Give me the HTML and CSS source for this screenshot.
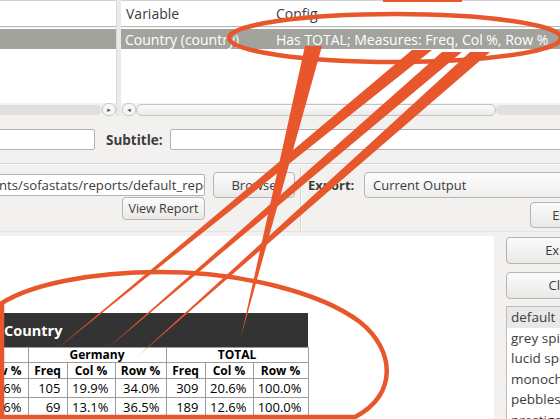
FILE: index.html
```html
<!DOCTYPE html>
<html lang="en">
<head>
    <meta charset="UTF-8">
    <title>Make Report Table</title>
    <link rel="stylesheet" href="styles.css">
</head>
<body>
<div class="window">
    <div class="top">
        <div class="pane pane-left">
            <div class="list-head"></div>
            <div class="list-row selected"></div>
            <div class="list-fill"></div>
            <div class="hscroll">
                <div class="trough"></div>
                <div class="arrow">&#9656;</div>
            </div>
        </div>
        <div class="sash"></div>
        <div class="pane pane-right">
            <div class="list-head">
                <div class="col col-var">Variable</div>
                <div class="col col-config">Config</div>
            </div>
            <div class="list-row selected">
                <div class="col col-var">Country (country)</div>
                <div class="col col-config">Has TOTAL; Measures: Freq, Col %, Row %</div>
            </div>
            <div class="list-fill"></div>
            <div class="hscroll">
                <div class="arrow">&#9666;</div>
                <div class="slider"></div>
                <div class="trough"></div>
            </div>
        </div>
    </div>

    <div class="titles">
        <div class="field title-field"></div>
        <span class="label">Subtitle:</span>
        <div class="field subtitle-field"></div>
    </div>

    <div class="output">
        <div class="output-left">
            <div class="field path-field">nts/sofastats/reports/default_report.htm</div>
            <div class="btn browse">Browse</div>
            <div class="btn view-report">View Report</div>
        </div>
        <div class="vsep"></div>
        <div class="output-right">
            <span class="label">Export:</span>
            <div class="combo">Current Output</div>
            <div class="btn export-small">Export</div>
        </div>
    </div>

    <div class="bottom">
        <div class="report">
            <table class="result">
                <colgroup>
                    <col class="c-first">
                    <col class="c-freq"><col class="c-col"><col class="c-row">
                    <col class="c-freq"><col class="c-col"><col class="c-row-last">
                </colgroup>
                <thead>
                    <tr><th class="var-head" colspan="7">Country</th></tr>
                    <tr class="groups">
                        <th></th>
                        <th colspan="3">Germany</th>
                        <th colspan="3">TOTAL</th>
                    </tr>
                    <tr class="measures">
                        <th class="first">Row %</th>
                        <th>Freq</th><th>Col %</th><th>Row %</th>
                        <th>Freq</th><th>Col %</th><th>Row %</th>
                    </tr>
                </thead>
                <tbody>
                    <tr><td>28.6%</td><td>105</td><td>19.9%</td><td>34.0%</td><td>309</td><td>20.6%</td><td>100.0%</td></tr>
                    <tr><td>31.6%</td><td>69</td><td>13.1%</td><td>36.5%</td><td>189</td><td>12.6%</td><td>100.0%</td></tr>
                </tbody>
            </table>
        </div>
        <div class="side">
            <div class="btn side-btn">Export</div>
            <div class="btn side-btn">Close</div>
            <div class="styles-list">
                <div class="style-item current">default</div>
                <div class="style-item">grey spirals</div>
                <div class="style-item">lucid spirals</div>
                <div class="style-item">monochrome</div>
                <div class="style-item">pebbles</div>
                <div class="style-item">prestige</div>
            </div>
        </div>
    </div>

    <!-- annotation drawn over the screen -->
    <svg class="marks" width="560" height="419" viewBox="0 0 560 419">
        <rect x="383" y="0" width="79" height="2" fill="#e8562b"/>
        <ellipse cx="395" cy="38" rx="166" ry="24" fill="none" stroke="#e8562b" stroke-width="4.5"/>
        <polygon points="305,46 322,46 241,337" fill="#e8562b"/>
        <polygon points="412,50 432,50 58,348" fill="#e8562b"/>
        <polygon points="442,52 462,52 108,348" fill="#e8562b"/>
        <polygon points="470,52 490,52 138,356" fill="#e8562b"/>
        <path d="M 2,417 L 2,303 C 30,285 90,272 160,272 C 240,272 320,292 360,322 C 395,350 398,395 355,417 Z"
              fill="none" stroke="#e8562b" stroke-width="4.5" stroke-linejoin="round"/>
    </svg>
</div>
</body>
</html>
```

FILE: styles.css
```css
body {
    margin: 0;
    overflow: hidden;
    background-color: #f2f1f0;
    font-family: 'Open Sans', 'DejaVu Sans', sans-serif;
    font-size: 13px;
    color: #3c3c3c;
}

.window {
    position: relative;
    width: 630px;
    height: 419px;
    overflow: hidden;
}

/* top: variable lists */
.top {
    display: flex;
    height: 116px;
    font-size: 14px;
}

.pane {
    display: flex;
    flex-direction: column;
    background-color: #fff;
}

.pane-left {
    width: 116px;
}

.sash {
    width: 4px;
    background-color: #ebeae9;
    border-left: 1px solid #dcdbda;
}

.pane-right {
    flex: 1;
}

.list-head {
    display: flex;
    height: 25px;
    border-top: 1px solid #d2d1d0;
    border-bottom: 1px solid #b9b8b6;
    box-shadow: 0 1px 0 #f4f4f4;
    align-items: center;
    flex-shrink: 0;
}

.list-row {
    display: flex;
    height: 20px;
    margin-top: 2px;
    align-items: center;
    flex-shrink: 0;
}

.list-row.selected {
    background-color: #a3a39e;
    color: #fff;
}

.col {
    white-space: nowrap;
    overflow: hidden;
}

.col-var {
    width: 150px;
    padding-left: 5px;
    box-sizing: border-box;
}

.list-row .col-var {
    width: 118px;
    margin-right: 32px;
    padding-left: 4px;
}

.col-config {
    padding-left: 5px;
}

.list-fill {
    flex: 1;
}

.hscroll {
    display: flex;
    height: 13px;
    background-color: #f2f1f0;
    align-items: center;
    flex-shrink: 0;
}

.hscroll .trough {
    flex: 1;
    height: 10px;
    background-color: #e1e0de;
    border-radius: 5px;
}

.pane-left .hscroll .trough {
    border-radius: 0 5px 5px 0;
}

.hscroll .arrow {
    width: 12px;
    height: 11px;
    border: 1px solid #c9c8c6;
    border-radius: 6px;
    background-color: #f6f6f5;
    font-size: 7px;
    line-height: 11px;
    text-align: center;
    color: #555;
}

.pane-right .hscroll .arrow {
    margin-left: 1px;
}

.hscroll .slider {
    width: 358px;
    height: 10px;
    border: 1px solid #c4c3c1;
    border-radius: 6px;
    background: linear-gradient(#fbfbfb, #ebeae9);
}

/* title row */
.titles {
    display: flex;
    align-items: center;
    height: 47px;
    border-bottom: 1px solid #d3d2d0;
    box-shadow: 0 1px 0 #fbfbfa;
}

.field {
    height: 19px;
    background-color: #fff;
    border: 1px solid #b4b3b1;
    border-radius: 2px;
    box-sizing: border-box;
}

.title-field {
    width: 98px;
    margin-left: -3px;
    height: 21px;
}

.label {
    font-weight: bold;
    color: #3c3c3c;
}

.titles .label {
    margin-left: 11px;
    margin-right: 7px;
    font-size: 13.5px;
}

.subtitle-field {
    flex: 1;
    height: 21px;
}

/* output row */
.output {
    display: flex;
    height: 67px;
}

.output-left {
    display: grid;
    grid-template-columns: 208px 82px;
    grid-template-rows: 26px 22px;
    column-gap: 8px;
    margin-left: -3px;
    padding-top: 8px;
}

.path-field {
    height: 22px;
    align-self: center;
    padding-left: 3px;
    line-height: 20px;
    white-space: nowrap;
    overflow: hidden;
    text-indent: -2px;
    font-size: 13.2px;
}

.btn {
    box-sizing: border-box;
    border: 1px solid #b6b5b3;
    border-radius: 4px;
    background: linear-gradient(#fbfbfb, #eae9e7);
    text-align: center;
    white-space: nowrap;
    overflow: hidden;
    color: #3c3c3c;
}

.browse {
    line-height: 24px;
}

.view-report {
    grid-column: 1;
    justify-self: end;
    width: 83px;
    height: 23px;
    margin-top: -1px;
    line-height: 21px;
    font-size: 12.5px;
}

.vsep {
    width: 1px;
    margin: 4px 7px 0 5px;
    background-color: #d6d5d3;
    box-shadow: 1px 0 0 #fbfbfa;
}

.output-right {
    display: grid;
    grid-template-columns: 56px 1fr;
    grid-template-rows: 26px 26px;
    row-gap: 4px;
    padding-top: 8px;
    flex: 1;
    align-items: center;
}

.combo {
    height: 26px;
    box-sizing: border-box;
    border: 1px solid #b6b5b3;
    border-radius: 4px;
    background: linear-gradient(#fdfdfd, #efeeed);
    line-height: 24px;
    padding-left: 8px;
}

.export-small {
    grid-column: 2;
    justify-self: start;
    width: 84px;
    height: 26px;
    margin-left: 166px;
    line-height: 24px;
}

/* bottom: report and styles */
.bottom {
    display: flex;
    flex: 1;
    padding-top: 4px;
    border-top: 1px solid #e4e3e1;
}

.report {
    width: 494px;
    height: 183px;
    background-color: #fff;
    padding-top: 77px;
    box-sizing: border-box;
    overflow: hidden;
}

.result {
    border-collapse: collapse;
    table-layout: fixed;
    width: 336px;
    margin-left: -28px;
    font-family: 'Open Sans', 'DejaVu Sans', sans-serif;
    font-size: 13px;
    color: #000;
}

.c-first { width: 56px; }
.c-freq { width: 39px; }
.c-col { width: 48px; }
.c-row { width: 51px; }
.c-row-last { width: 55px; }

.result th, .result td {
    border: 1px solid #9c9c9c;
    padding: 0;
    white-space: nowrap;
    overflow: hidden;
}

.result th {
    font-size: 12px;
}

.result .var-head {
    height: 34px;
    background-color: #333;
    color: #fff;
    font-size: 14.5px;
    text-align: left;
    padding-left: 32px;
    border: none;
}

.result .groups th {
    height: 14px;
    line-height: 14px;
}

.result .measures th {
    height: 15px;
    line-height: 15px;
}

.result .measures .first,
.result td {
    text-align: right;
    padding-right: 6px;
}

.result td {
    height: 18px;
    line-height: 18px;
}

.result tr > :first-child {
    border-left: none;
}

.side {
    display: flex;
    flex-direction: column;
    padding-left: 12px;
    padding-top: 1px;
    gap: 8px;
}

.side-btn {
    width: 118px;
    height: 27px;
    line-height: 25px;
}

.styles-list {
    width: 120px;
    background-color: #fff;
    border: 1px solid #bdbcba;
    margin-top: -1px;
}

.style-item {
    height: 20.5px;
    line-height: 20px;
    padding-left: 4px;
    white-space: nowrap;
    font-size: 13.5px;
}

.style-item.current {
    background-color: #e9e8e7;
}

/* annotation */
.marks {
    position: absolute;
    top: 0;
    left: 0;
    pointer-events: none;
}
```
